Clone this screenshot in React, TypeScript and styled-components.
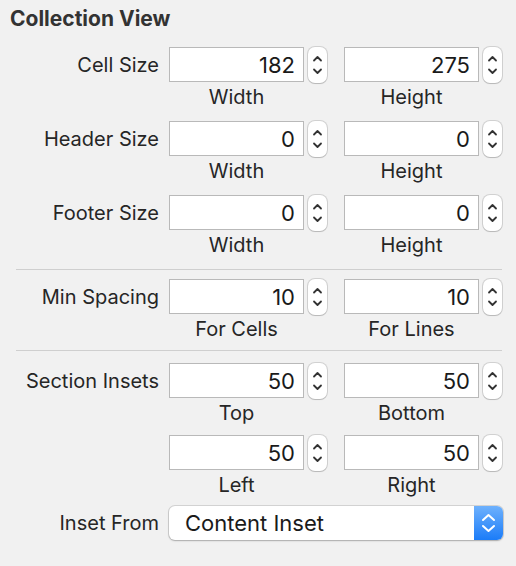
import styled, { createGlobalStyle } from "styled-components";

const GlobalStyle = createGlobalStyle`
  html, body {
    margin: 0;
    padding: 0;
    background: #f1f1f1;
  }
  body {
    font-family: Inter, "Liberation Sans", Arial, sans-serif;
    color: #2b2b2b;
  }
`;

interface Pair {
  value: string;
  caption: string;
}

interface Row {
  label?: string;
  left: Pair;
  right: Pair;
  gapAfter: number;
}

const StepperIcon = () => (
  <svg width="19" height="36" viewBox="0 0 19 36">
    <path d="M6 13.5 L9.5 10 L13 13.5" fill="none" stroke="#333" strokeWidth="1.8" strokeLinecap="round" strokeLinejoin="round" />
    <path d="M6 22.5 L9.5 26 L13 22.5" fill="none" stroke="#333" strokeWidth="1.8" strokeLinecap="round" strokeLinejoin="round" />
  </svg>
);

const PopupArrows = () => (
  <svg width="29" height="34" viewBox="0 0 29 34">
    <path d="M9 14 L14.5 9 L20 14" fill="none" stroke="#fff" strokeWidth="2" strokeLinecap="round" strokeLinejoin="round" />
    <path d="M9 20 L14.5 25 L20 20" fill="none" stroke="#fff" strokeWidth="2" strokeLinecap="round" strokeLinejoin="round" />
  </svg>
);

const NumberField = ({ pair }: { pair: Pair }) => (
  <FieldBlock>
    <FieldLine>
      <Field>{pair.value}</Field>
      <Stepper>
        <StepperIcon />
      </Stepper>
    </FieldLine>
    <Caption>{pair.caption}</Caption>
  </FieldBlock>
);

const FieldRow = ({ row }: { row: Row }) => (
  <RowWrap $gap={row.gapAfter}>
    <RowLabel>{row.label ?? ""}</RowLabel>
    <NumberField pair={row.left} />
    <NumberField pair={row.right} />
  </RowWrap>
);

const sizeRows: Row[] = [
  { label: "Cell Size", left: { value: "182", caption: "Width" }, right: { value: "275", caption: "Height" }, gapAfter: 12 },
  { label: "Header Size", left: { value: "0", caption: "Width" }, right: { value: "0", caption: "Height" }, gapAfter: 12 },
  { label: "Footer Size", left: { value: "0", caption: "Width" }, right: { value: "0", caption: "Height" }, gapAfter: 12 },
];

const spacingRows: Row[] = [
  { label: "Min Spacing", left: { value: "10", caption: "For Cells" }, right: { value: "10", caption: "For Lines" }, gapAfter: 9 },
];

const insetRows: Row[] = [
  { label: "Section Insets", left: { value: "50", caption: "Top" }, right: { value: "50", caption: "Bottom" }, gapAfter: 10 },
  { left: { value: "50", caption: "Left" }, right: { value: "50", caption: "Right" }, gapAfter: 8 },
];

export default function App() {
  return (
    <>
      <GlobalStyle />
      <Panel>
        <Title>Collection View</Title>
        {sizeRows.map((r) => (
          <FieldRow key={r.label} row={r} />
        ))}
        <Separator $after={9} />
        {spacingRows.map((r) => (
          <FieldRow key={r.label} row={r} />
        ))}
        <Separator $after={12} />
        {insetRows.map((r, i) => (
          <FieldRow key={i} row={r} />
        ))}
        <PopupRow>
          <RowLabel>Inset From</RowLabel>
          <Popup>
            <PopupText>Content Inset</PopupText>
            <PopupButton>
              <PopupArrows />
            </PopupButton>
          </Popup>
        </PopupRow>
      </Panel>
    </>
  );
}

const Panel = styled.div`
  width: 516px;
  height: 566px;
  box-sizing: border-box;
  padding-top: 5px;
  background: #f1f1f1;
  overflow: hidden;
`;

const Title = styled.div`
  font-size: 21px;
  font-weight: 700;
  color: #333;
  padding-left: 10px;
  height: 28px;
  line-height: 28px;
  margin-bottom: 14px;
`;

const RowWrap = styled.div<{ $gap: number }>`
  display: flex;
  align-items: flex-start;
  margin-bottom: ${(p) => p.$gap}px;
`;

const RowLabel = styled.div`
  width: 159px;
  flex-shrink: 0;
  text-align: right;
  padding-right: 10px;
  box-sizing: content-box;
  height: 36px;
  line-height: 37px;
  font-size: 20px;
  color: #262626;
`;

const FieldBlock = styled.div`
  display: flex;
  flex-direction: column;
  margin-right: 17px;
  &:last-child {
    margin-right: 0;
  }
`;

const FieldLine = styled.div`
  display: flex;
  align-items: flex-start;
  gap: 4px;
`;

const Field = styled.div`
  width: 135px;
  height: 35px;
  box-sizing: border-box;
  background: #fff;
  border: 1px solid #b9b9b9;
  text-align: right;
  padding-right: 8px;
  font-size: 22px;
  line-height: 34px;
  color: #1a1a1a;
`;

const Stepper = styled.div`
  width: 19px;
  height: 36px;
  box-sizing: border-box;
  background: #fff;
  border-radius: 7px;
  box-shadow: 0 0 0 1px rgba(0, 0, 0, 0.13), 0 1px 1px rgba(0, 0, 0, 0.12);
  display: flex;
`;

const Caption = styled.div`
  width: 135px;
  text-align: center;
  margin-top: 2px;
  height: 24px;
  line-height: 24px;
  font-size: 20px;
  color: #262626;
`;

const Separator = styled.div<{ $after: number }>`
  height: 1px;
  background: #cfcfcf;
  margin: 0 14px ${(p) => p.$after}px 16px;
`;

const PopupRow = styled.div`
  display: flex;
  align-items: center;
`;

const Popup = styled.div`
  width: 334px;
  height: 34px;
  box-sizing: border-box;
  display: flex;
  background: #fff;
  border-radius: 6px;
  box-shadow: 0 0 0 1px rgba(0, 0, 0, 0.12), 0 1px 2px rgba(0, 0, 0, 0.2);
  overflow: hidden;
`;

const PopupText = styled.div`
  flex: 1;
  padding-left: 16px;
  font-size: 22px;
  line-height: 34px;
  color: #1a1a1a;
`;

const PopupButton = styled.div`
  width: 29px;
  height: 34px;
  background: linear-gradient(to bottom, #6eb1fd, #1b7cf8);
  display: flex;
`;
